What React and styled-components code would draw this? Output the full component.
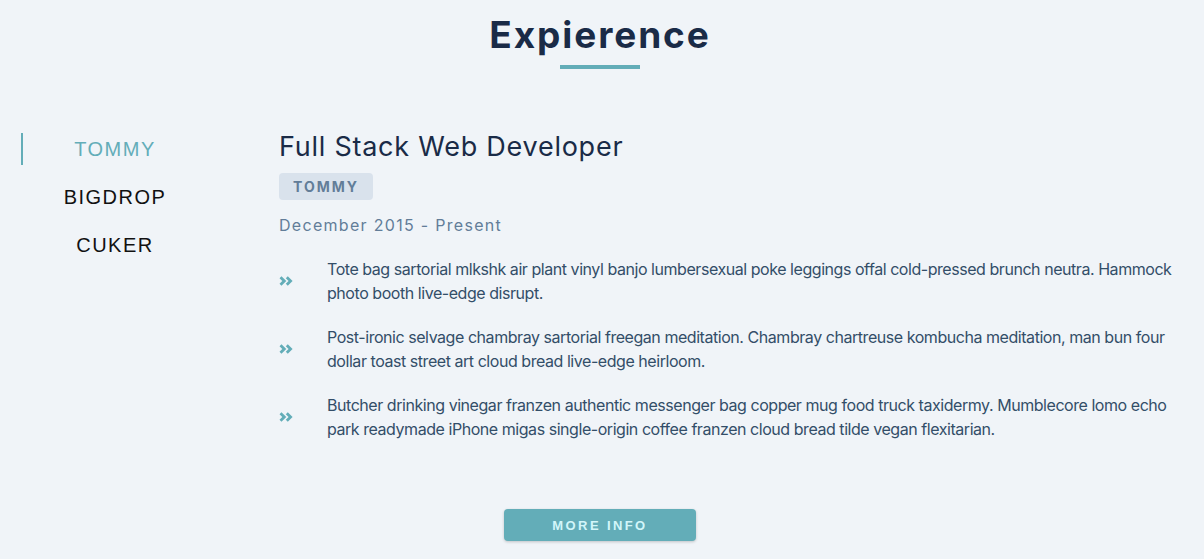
import styled, { createGlobalStyle } from "styled-components";
import { useState } from "react";

const jobs = [
  {
    id: "tommy",
    company: "TOMMY",
    title: "Full Stack Web Developer",
    dates: "December 2015 - Present",
    duties: [
      "Tote bag sartorial mlkshk air plant vinyl banjo lumbersexual poke leggings offal cold-pressed brunch neutra. Hammock photo booth live-edge disrupt.",
      "Post-ironic selvage chambray sartorial freegan meditation. Chambray chartreuse kombucha meditation, man bun four dollar toast street art cloud bread live-edge heirloom.",
      "Butcher drinking vinegar franzen authentic messenger bag copper mug food truck taxidermy. Mumblecore lomo echo park readymade iPhone migas single-origin coffee franzen cloud bread tilde vegan flexitarian.",
    ],
  },
  { id: "bigdrop", company: "BIGDROP", title: "", dates: "", duties: [] },
  { id: "cuker", company: "CUKER", title: "", dates: "", duties: [] },
];

const GlobalStyle = createGlobalStyle`
  * { box-sizing: border-box; }
  body {
    margin: 0;
    background: #f0f4f8;
    font-family: Inter, "Noto Sans", sans-serif;
  }
`;

export default function App() {
  const [value, setValue] = useState(0);
  const { title, dates, duties, company } = jobs[value];
  return (
    <Page>
      <GlobalStyle />
      <Heading>
        <h2>Expierence</h2>
        <Underline />
      </Heading>
      <Center>
        <Tabs>
          {jobs.map((job, i) => (
            <TabBtn key={job.id} $active={i === value} onClick={() => setValue(i)}>
              {job.company}
            </TabBtn>
          ))}
        </Tabs>
        <JobInfo>
          <JobTitle>{title}</JobTitle>
          <Badge>{company}</Badge>
          <JobDate>{dates}</JobDate>
          {duties.map((duty, i) => (
            <Duty key={i}>
              <Chevrons />
              <p>{duty}</p>
            </Duty>
          ))}
        </JobInfo>
      </Center>
      <Footer>
        <MoreBtn type="button">more info</MoreBtn>
      </Footer>
    </Page>
  );
}

function Chevrons() {
  return (
    <svg width="14" height="10" viewBox="0 0 14 10" fill="none">
      <polyline points="1.5,1.2 5.3,5 1.5,8.8" stroke="#63adb8" strokeWidth="2.8" />
      <polyline points="7.8,1.2 11.6,5 7.8,8.8" stroke="#63adb8" strokeWidth="2.8" />
    </svg>
  );
}

const Page = styled.section`
  min-height: 559px;
  padding-top: 13px;
`;
const Heading = styled.div`
  display: flex;
  flex-direction: column;
  align-items: center;
  padding-right: 4px;
  h2 {
    margin: 0;
    font-size: 37px;
    line-height: 44px;
    font-weight: 700;
    letter-spacing: 1.9px;
    color: #1a2b47;
  }
`;
const Underline = styled.div`
  width: 80px;
  height: 4px;
  margin-top: 8px;
  background: #63adb8;
`;
const Center = styled.div`
  display: grid;
  grid-template-columns: 186px 1fr;
  column-gap: 72px;
  padding: 0 12px 0 21px;
  margin-top: 64px;
`;
const Tabs = styled.div`
  display: flex;
  flex-direction: column;
  gap: 16px;
`;
const TabBtn = styled.button`
  height: 32px;
  background: transparent;
  border: none;
  border-left: 2px solid ${(p) => (p.$active ? "#63adb8" : "transparent")};
  color: ${(p) => (p.$active ? "#63adb8" : "#111")};
  font-family: "Liberation Sans", Arial, sans-serif;
  font-size: 20px;
  letter-spacing: 1.5px;
  padding: 0;
  cursor: pointer;
`;
const JobInfo = styled.article`
  display: flex;
  flex-direction: column;
  align-items: flex-start;
`;
const JobTitle = styled.h3`
  margin: 0;
  font-size: 27px;
  line-height: 28px;
  font-weight: 400;
  letter-spacing: 0.75px;
  color: #1a2b47;
`;
const Badge = styled.h4`
  margin: 12px 0 0;
  height: 27px;
  padding: 0 14px;
  display: flex;
  align-items: center;
  border-radius: 4px;
  background: #d9e2ec;
  color: #627d98;
  font-size: 14px;
  font-weight: 700;
  letter-spacing: 2px;
`;
const JobDate = styled.p`
  margin: 13px 0 20px;
  font-size: 16px;
  line-height: 24px;
  letter-spacing: 1.3px;
  color: #627d98;
`;
const Duty = styled.div`
  display: grid;
  grid-template-columns: 48px 1fr;
  align-items: center;
  margin-bottom: 20px;
  p {
    margin: 0;
    font-size: 16px;
    line-height: 24px;
    letter-spacing: -0.45px;
    color: #334e68;
  }
  svg { display: block; }
`;
const Footer = styled.div`
  display: flex;
  justify-content: center;
  padding-right: 4px;
  margin-top: 48px;
`;
const MoreBtn = styled.button`
  width: 192px;
  height: 32px;
  border: none;
  border-radius: 4px;
  background: #63adb8;
  color: #d2f6fa;
  font-family: "Liberation Sans", Arial, sans-serif;
  font-size: 13px;
  font-weight: 700;
  letter-spacing: 2.4px;
  text-transform: uppercase;
  box-shadow: 0 1px 3px rgba(0, 0, 0, 0.2);
  cursor: pointer;
`;
